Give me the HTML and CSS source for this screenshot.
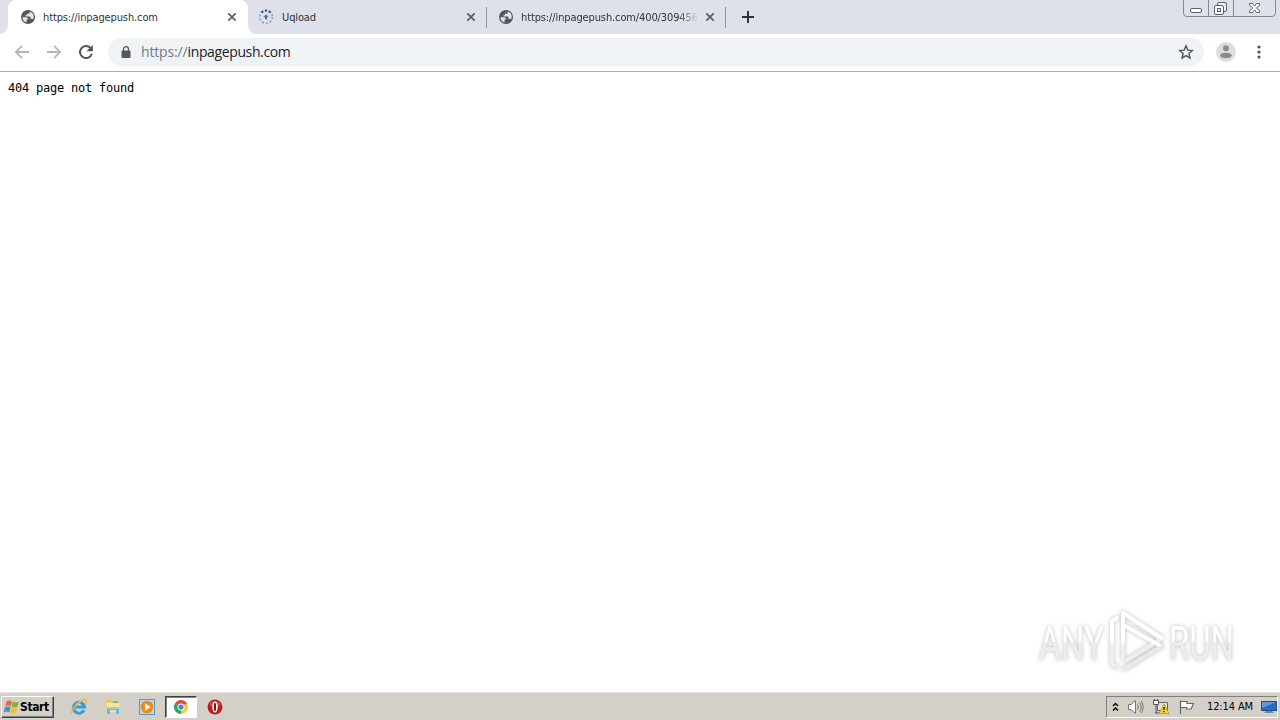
FILE: index.html
```html
<!DOCTYPE html>
<html lang="en">
<head>
    <meta charset="UTF-8">
    <title>https://inpagepush.com</title>
    <link rel="stylesheet" href="styles.css">
</head>
<body>
    <svg width="0" height="0" class="defs">
        <symbol id="globe" viewBox="0 0 16 16">
            <circle cx="8" cy="8" r="7" fill="#54575b"/>
            <path d="M2.500 8.200h3.500q2.200.2 2.200 2.300h-1.700v3q-4-1.300-4-5.300zM9.800 2.600v.8q0 1.400-1.500 1.400H6.900v1.400H5.500v1.400h4.200q.7 0 .7.700v1.500h1.500q.7 0 1.200.6Q15.300 4.500 9.800 2.600z" fill="#e3e5e8"/>
        </symbol>
        <symbol id="close" viewBox="0 0 10 10">
            <path d="M1.300 1.300l7.400 7.400M8.700 1.300L1.300 8.700" stroke="#5a5d61" stroke-width="1.700"/>
        </symbol>
    </svg>

    <div class="tabs">
        <div class="tab active">
            <svg class="favicon" width="16" height="16"><use href="#globe"/></svg>
            <span class="tab-title">https://inpagepush.com</span>
            <svg class="close" width="10" height="10"><use href="#close"/></svg>
        </div>
        <div class="tab">
            <svg class="favicon" width="16" height="16" viewBox="0 0 16 16">
                <circle cx="7" cy="8" r="6.300" fill="none" stroke="#98aabd" stroke-width="2" stroke-dasharray="2 1.960"/>
                <path d="M2.500 3.500A6.300 6.300 0 0 1 12.500 4.900" fill="none" stroke="#405d7d" stroke-width="2.200" stroke-dasharray="2.200 1.700"/>
                <path d="M7 5.300l2.700 3H8v2H6v-2H4.300z" fill="#527294"/>
            </svg>
            <span class="tab-title">Uqload</span>
            <svg class="close" width="10" height="10"><use href="#close"/></svg>
        </div>
        <div class="tab">
            <svg class="favicon" width="16" height="16"><use href="#globe"/></svg>
            <span class="tab-title faded">https://inpagepush.com/400/309456</span>
            <svg class="close" width="10" height="10"><use href="#close"/></svg>
        </div>
        <div class="new-tab">
            <svg width="12" height="12" viewBox="0 0 12 12"><path d="M6 0v12M0 6h12" stroke="#303338" stroke-width="2"/></svg>
        </div>
        <div class="window-buttons">
            <svg width="93" height="17" viewBox="0 0 93 17" fill="none" stroke="#5c6068">
                <path d="M.5 0v13q0 3.500 3.500 3.500h85q3.500 0 3.500-3.500V0M25.500 0v16M50.500 0v16" stroke="#858991"/>
                <rect x="7.500" y="8.500" width="11" height="4" rx="1.500" fill="#fff"/>
                <rect x="34.500" y="2.500" width="9" height="9" rx="1.500" fill="#eef0f3"/>
                <rect x="31.500" y="5.500" width="9" height="9" rx="1.500" fill="#fff"/>
                <rect x="34.500" y="8.500" width="3" height="3"/>
                <path d="M66.500 3.500h3l2 2.500 2-2.500h3v1.500l-3 3 3 3v1.500h-3l-2-2.500-2 2.500h-3V11l3-3-3-3z" fill="#fff"/>
            </svg>
        </div>
    </div>

    <div class="toolbar">
        <svg class="nav" width="16" height="16" viewBox="0 0 16 16" fill="none" stroke="#b5b6b8" stroke-width="1.800"><path d="M15 8H2M8 1.800L1.800 8 8 14.200"/></svg>
        <svg class="nav" width="16" height="16" viewBox="0 0 16 16" fill="none" stroke="#b5b6b8" stroke-width="1.800"><path d="M1 8h13M8 1.800L14.200 8 8 14.200"/></svg>
        <svg class="nav" width="16" height="16" viewBox="0 0 16 16"><path d="M12.600 4.200A6 6 0 1 0 13.800 9.700" fill="none" stroke="#505357" stroke-width="2"/><path d="M14.800 1v6.300H8.500z" fill="#505357"/></svg>
        <div class="omnibox">
            <svg width="10" height="13" viewBox="0 0 10 13"><rect x=".5" y="4.500" width="9" height="7.500" rx="1" fill="#54575b"/><path d="M2.500 5V3.200a2.500 2.500 0 0 1 5 0V5" fill="none" stroke="#54575b" stroke-width="1.300"/></svg>
            <span class="url"><span class="scheme">https://</span>inpagepush.com</span>
            <svg class="star" width="16" height="16" viewBox="0 0 16 16"><path d="M8 1.800l1.800 4.300 4.600.4-3.500 3 1.100 4.500-4-2.400L4 14l1.100-4.500-3.500-3 4.600-.4z" fill="none" stroke="#505357" stroke-width="1.400"/></svg>
        </div>
        <svg class="avatar" width="20" height="20" viewBox="0 0 20 20"><circle cx="10" cy="10" r="10" fill="#dedede"/><circle cx="10" cy="6.200" r="3" fill="#8b8b8b"/><ellipse cx="10" cy="13.500" rx="5.800" ry="2.800" fill="#8b8b8b"/></svg>
        <svg class="menu" width="4" height="14" viewBox="0 0 4 14" fill="#505357"><circle cx="2" cy="2" r="1.600"/><circle cx="2" cy="7" r="1.600"/><circle cx="2" cy="12" r="1.600"/></svg>
    </div>

    <div class="page">
        <pre>404 page not found</pre>
        <svg class="watermark" width="210" height="74" viewBox="0 0 210 74">
            <defs>
                <linearGradient id="shade" gradientUnits="userSpaceOnUse" x1="0" y1="0" x2="0" y2="74">
                    <stop offset=".49" stop-color="#fff"/>
                    <stop offset=".49" stop-color="#ededed"/>
                </linearGradient>
            </defs>
            <g fill="url(#shade)" class="mark-text">
                <text x="6" y="54" textLength="65" lengthAdjust="spacingAndGlyphs">ANY</text>
                <text x="136" y="54" textLength="65" lengthAdjust="spacingAndGlyphs">RUN</text>
            </g>
            <g fill="none" stroke-width="4" stroke-linejoin="round" stroke-linecap="round">
                <path d="M84 12l-5 3v43l5 3M90 53V7l38 26-34 21" stroke="#eee"/>
                <path d="M91 63l38-23" stroke="#e9e9e9"/>
                <path d="M90 36V7l39 25M92 20l34 19M84 12l-5 3v21" stroke="#fff"/>
            </g>
        </svg>
    </div>

    <div class="taskbar">
        <div class="start">
            <svg width="17" height="16" viewBox="0 0 17 16">
                <path d="M3.500 2.500Q6 .5 9 2.200L7.800 7.200Q5 5.800 2.200 7.500z" fill="#e86b32"/>
                <path d="M9.800 2.600q3 1.500 6-.2l-1.300 5.100q-3 1.700-5.900.2z" fill="#77b743"/>
                <path d="M2 8.500q2.800-1.700 5.600-.3l-1.300 5Q3.500 11.600.7 13.400z" fill="#438ed0"/>
                <path d="M8.400 8.600q3 1.500 6-.2L13 13.500q-3 1.600-5.900 0z" fill="#f5bd35"/>
            </svg>
            <span>Start</span>
        </div>
        <div class="quick">
            <div class="app">
                <svg width="18" height="18" viewBox="0 0 18 18" fill="none"><path d="M14 12.200A5.500 5.500 0 1 1 14.500 9H5" stroke="#399bd8" stroke-width="3"/><path d="M5.500 6.500Q7 4.500 10 5" stroke="#8dd6f6"/><path d="M2 15.800C-1 13.500 12-.5 16 1.800q1 .8-.6 3.500" stroke="#e9b93d" stroke-width="1.500"/></svg>
            </div>
            <div class="app">
                <svg width="18" height="18" viewBox="0 0 18 18"><path d="M2 2h5l1 1.500h7V14H2z" fill="#e8c45e"/><path d="M2.500 4.500h13V14h-13z" fill="#f9e69d"/><path d="M9 3h5v2H9z" fill="#78bb72"/><path d="M3 16v-5.500q0-1.500 1.500-1.500h9q1.500 0 1.500 1.500V16h-3v-4H6v4z" fill="#69b9df"/><path d="M4 10h10" stroke="#c5e8f7"/></svg>
            </div>
            <div class="app">
                <svg width="18" height="18" viewBox="0 0 18 18"><rect x="1.500" y="1.500" width="15" height="15" fill="#b9d6ea" stroke="#6597b9"/><circle cx="9" cy="9" r="6.300" fill="#ef8b1b"/><path d="M7 5.200L12.500 9 7 12.800z" fill="#fff"/></svg>
            </div>
            <div class="app pressed">
                <svg width="16" height="16" viewBox="0 0 16 16"><path d="M8 8L1.900 4.500A7 7 0 0 1 14.100 4.500z" fill="#dd4b3e"/><path d="M8 8l6.100-3.500A7 7 0 0 1 8 15z" fill="#f6ca3e"/><path d="M8 8v7A7 7 0 0 1 1.900 4.500z" fill="#38a05a"/><circle cx="8" cy="8" r="3.500" fill="#fff"/><circle cx="8" cy="8" r="2.600" fill="#4385d7"/></svg>
            </div>
            <div class="app">
                <svg width="16" height="16" viewBox="0 0 16 16"><circle cx="8" cy="8" r="7.500" fill="#b71f25"/><path d="M2 6a6.500 6.500 0 0 1 12 0Q8 9 2 6z" fill="#d4484b"/><ellipse cx="8" cy="8" rx="2.700" ry="5.500" fill="#fff"/><rect x="7" y="4" width="2" height="8" rx="1" fill="#8d1118"/></svg>
            </div>
        </div>
        <div class="tray">
            <svg width="7" height="10" viewBox="0 0 7 10" fill="none" stroke="#000" stroke-width="1.400"><path d="M1 4l2.500-2.500L6 4M1 8.500L3.500 6 6 8.500"/></svg>
            <svg width="17" height="16" viewBox="0 0 17 16" fill="none" stroke="#777"><path d="M1.500 5.500H4L8.500 1.500v13L4 10.500H1.500z" fill="#fff"/><path d="M10.500 5.500q2 2.500 0 5M12.500 3.500q3.500 4.500 0 9M14.200 2q4 6 0 12" /></svg>
            <svg width="18" height="17" viewBox="0 0 18 17"><path d="M5.500 4.500h10v8h-10z" fill="#dce0df" stroke="#686868"/><path d="M1.500 2.500h5v4h-5zM4 7v8M2.500 1v2M5.500 1v2M3 15h5" fill="#fff" stroke="#555"/><path d="M12 6l5 9.500H7z" fill="#f5d332" stroke="#b38b18" stroke-width=".7"/><path d="M12 9v3M12 13v1.200" stroke="#222" stroke-width="1.400"/></svg>
            <svg width="17" height="16" viewBox="0 0 17 16"><path d="M2.500 15V1.500M3 2.500h6v2h6.500L13 10H8.500V8.500H3" fill="#fff" stroke="#666" stroke-width="1.200"/></svg>
            <span class="clock">12:14 AM</span>
            <svg width="16" height="14" viewBox="0 0 16 14"><rect x=".5" y="1.500" width="15" height="9" fill="#286cc0" stroke="#174c8b"/><path d="M1 2h14L1 8z" fill="#5c9ade"/><path d="M5 11h6l2 2H3z" fill="#6c88a7"/></svg>
        </div>
    </div>
</body>
</html>
```

FILE: styles.css
```css
body {
    margin: 0;
    height: 720px;
    display: flex;
    flex-direction: column;
    overflow: hidden;
    background: #fff;
    font-family: "DejaVu Sans Condensed", "DejaVu Sans", sans-serif;
    font-size: 11px;
    color: #303338;
}
.defs {
    position: absolute;
}
svg {
    display: block;
    flex: none;
}
.tabs {
    display: flex;
    height: 34px;
    background: #dee1e9;
    padding-left: 8px;
}
.tab {
    display: flex;
    align-items: center;
    box-sizing: border-box;
    width: 239px;
    height: 34px;
    padding: 0 10px 0 11px;
    border-right: 1px solid transparent;
    border-image: linear-gradient(transparent 8px, #92959b 8px, #92959b 27px, transparent 27px) 1;
}
.tab.active {
    position: relative;
    width: 240px;
    padding-left: 12px;
    background: #fff;
    border: 0;
    border-radius: 8px 8px 0 0;
}
.tab.active::before,
.tab.active::after {
    content: "";
    position: absolute;
    bottom: 0;
    width: 8px;
    height: 8px;
}
.tab.active::before {
    left: -8px;
    background: radial-gradient(circle at 0 0, transparent 7.5px, #fff 8px);
}
.tab.active::after {
    right: -8px;
    background: radial-gradient(circle at 100% 0, transparent 7.5px, #fff 8px);
}
.tab-title {
    width: 176px;
    margin-left: 7px;
    overflow: hidden;
    white-space: nowrap;
    letter-spacing: -0.12px;
}
.faded {
    -webkit-mask-image: linear-gradient(90deg, #000 156px, transparent 178px);
    mask-image: linear-gradient(90deg, #000 156px, transparent 178px);
}
.close {
    margin-left: auto;
}
.tab.active .close {
    margin-left: 8px;
}
.new-tab {
    padding: 11px 0 0 16px;
}
.window-buttons {
    margin-left: auto;
    padding-right: 4px;
}
.toolbar {
    display: flex;
    align-items: center;
    box-sizing: border-box;
    height: 38px;
    padding: 0 20px 1px 14px;
    border-bottom: 1px solid #adadad;
}
.nav {
    margin-right: 16px;
}
.omnibox {
    display: flex;
    align-items: center;
    flex: 1;
    height: 28px;
    margin-left: -2px;
    padding: 0 10px 0 13px;
    border-radius: 14px;
    background: #f0f3f6;
}
.url {
    margin: 0 0 2px 10px;
    font-family: "Open Sans", "Noto Sans", sans-serif;
    font-size: 14px;
    letter-spacing: -0.38px;
    color: #202328;
}
.scheme {
    letter-spacing: -0.15px;
    color: #75797e;
}
.star {
    margin-left: auto;
}
.avatar {
    margin-left: 12px;
}
.menu {
    margin: 0 -1px 0 21px;
}
.page {
    position: relative;
    flex: 1;
}
.page pre {
    margin: 9px 8px;
    font: 12px/14px "DejaVu Sans Mono", monospace;
    letter-spacing: -0.22px;
    color: #000;
}
.watermark {
    position: absolute;
    left: 1033px;
    top: 534px;
    overflow: visible;
    filter: drop-shadow(0 0 2px #bbb);
}
.mark-text {
    font: 49px Roboto, sans-serif;
}
.taskbar {
    display: flex;
    align-items: center;
    box-sizing: border-box;
    height: 28px;
    padding: 0 2px 0 1px;
    border-top: 1px solid #e7e4dc;
    background: #d4d0c8;
    color: #000;
}
.start {
    display: flex;
    align-items: center;
    box-sizing: border-box;
    width: 53px;
    height: 22px;
    padding-left: 1px;
    border: 1px solid;
    border-color: #fff #404040 #404040 #fff;
    box-shadow: inset -1px -1px #808080;
    font-size: 12px;
    font-weight: bold;
    letter-spacing: -0.4px;
}
.quick {
    display: flex;
    gap: 2px;
    margin-left: 9px;
}
.app {
    display: flex;
    align-items: center;
    justify-content: center;
    box-sizing: border-box;
    width: 32px;
    height: 22px;
}
.pressed {
    border: 1px solid;
    border-color: #404040 #fff #fff #404040;
    box-shadow: inset 1px 1px #808080;
    background: #fff;
}
.tray {
    display: flex;
    align-items: center;
    box-sizing: border-box;
    width: 172px;
    height: 22px;
    margin-left: auto;
    padding: 0 0 0 5px;
    border: 1px solid;
    border-color: #808080 #fff #fff #808080;
    gap: 8px;
}
.clock {
    margin-left: 4px;
    width: 46px;
    white-space: nowrap;
    letter-spacing: -0.12px;
}
```
